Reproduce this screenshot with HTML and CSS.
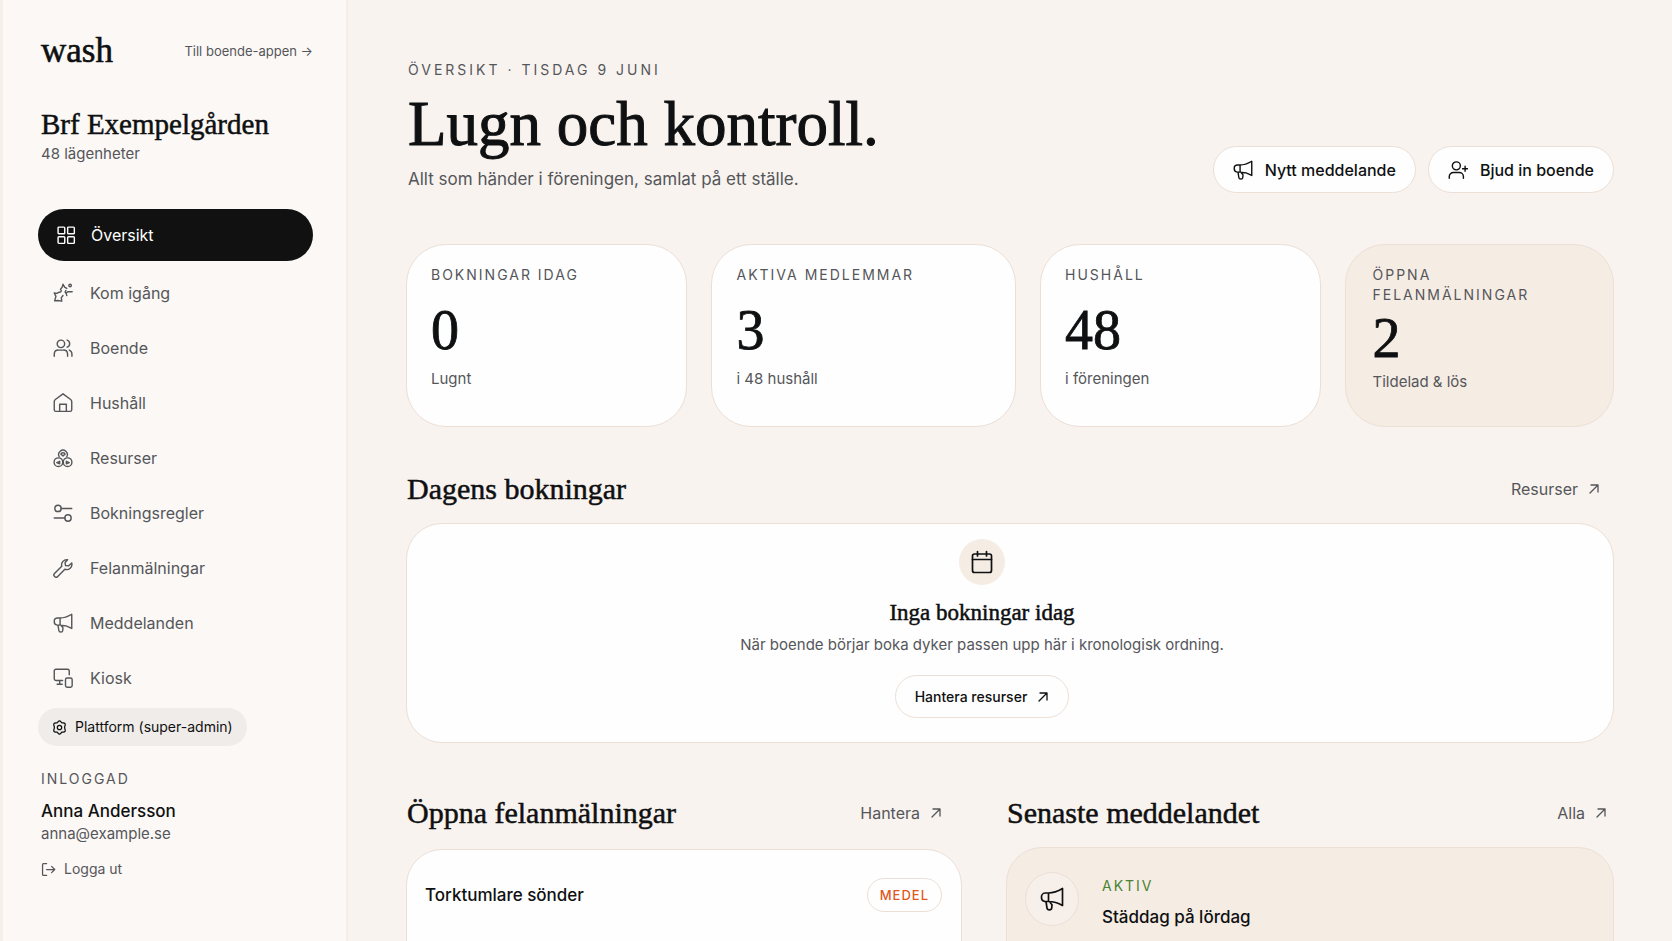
FILE: index.html
```html
<!DOCTYPE html>
<html lang="sv">
<head>
<meta charset="utf-8">
<meta name="viewport" content="width=device-width, initial-scale=1">
<title>wash – Översikt</title>
<link rel="stylesheet" href="styles.css">
</head>
<body>
<svg class="sprite" aria-hidden="true">
  <symbol id="grid" viewBox="0 0 24 24"><rect x="2.500" y="2.500" width="8" height="8" rx="1"/><rect x="14" y="2.500" width="8" height="8" rx="1"/><rect x="2.500" y="14" width="8" height="8" rx="1"/><rect x="14" y="14" width="8" height="8" rx="1"/></symbol>
  <symbol id="sparkle" viewBox="0 0 24 24"><path d="M9 7.500 11 5l1-3.500L14 5l2.500 1.500M1.500 12l3 .5 3-1.500M1.500 12l2 4-1.500 5.500L5.500 21l5 .8-.5-4.300 2-2.500M9 7.500c1.500 1 1 3-.5 3.500M15.500 9c-1.500 1.500-1 2.500.5 3.500M23 10.500h-5c-2 .5-2.500 2-1.500 4.500"/><circle cx="20.500" cy="3" r="1.500"/></symbol>
  <symbol id="users" viewBox="0 0 24 24"><circle cx="9.500" cy="7" r="4.500"/><path d="M1.500 22v-3a5 5 0 0 1 5-4.500h6a5 5 0 0 1 5 4.500v3M17 2.500c4 1.500 4 7 0 8.500M19.500 14.500c2 .7 3.200 2.500 3.200 4.500v3"/></symbol>
  <symbol id="home" viewBox="0 0 24 24"><path d="M1.500 10.500c0-1.200.4-2 1.300-2.700L12 1l9.200 6.800c.9.700 1.300 1.500 1.300 2.700V20a2 2 0 0 1-2 2h-17a2 2 0 0 1-2-2zM8 22v-8.500h8V22"/></symbol>
  <symbol id="resources" viewBox="0 0 24 24"><path d="M7.500 10.500a5.200 5.200 0 1 1 9 0"/><circle cx="6.500" cy="17" r="5.200"/><circle cx="17.500" cy="17" r="5.200"/><path d="M9.500 7.500c.5-2.500 4.500-2.500 5 0l-2.500 2zM4.500 17.500l3.500-1.500v3zM19.500 17.500 16 16v3z"/></symbol>
  <symbol id="sliders" viewBox="0 0 24 24"><circle cx="6" cy="6.500" r="3.800"/><path d="M9.800 6.500H22.500M1.500 18h12.700"/><circle cx="18" cy="18" r="3.800"/></symbol>
  <symbol id="wrench" viewBox="0 0 24 24"><path d="M17.500 2 14.500 5.500l.5 3.500 3.500.5L22.500 6a6.300 6.300 0 0 1-8.300 7.500l-8.500 8.700a2.600 2.600 0 0 1-3.900-3.700l8.700-8.700A6.300 6.300 0 0 1 17.500 2z"/></symbol>
  <symbol id="megaphone" viewBox="0 0 24 24"><path d="M8.500 6c5 0 9-1.500 14-4.500v17c-5-3-9-4-14-4H5a4 4 0 0 1-3.500-4.200A4 4 0 0 1 5 6zM8.500 6v8.500M6 14.500l1 6.500c.3 2.500 4.500 2.500 4.700 0l.3-3.200-2.500-3"/></symbol>
  <symbol id="kiosk" viewBox="0 0 24 24"><path d="M19.500 8V3.500a2 2 0 0 0-2-2h-14a2 2 0 0 0-2 2V13a2 2 0 0 0 2 2h8M8 15v4M5 19.500h6"/><rect x="15" y="12" width="8" height="11" rx="2"/></symbol>
  <symbol id="gear" viewBox="0 0 24 24"><path d="M12 1.500c2 0 2.500 2.500 4 3s4-.5 5 1.500-.8 3.500-.8 6 1.800 4 .8 6-3.500 1-5 1.500-2 3-4 3-2.500-2.500-4-3-4 .5-5-1.500.8-3.500.8-6S2 8 3 6s3.500-1 5-1.500 2-3 4-3z"/><circle cx="12" cy="12" r="3.500"/></symbol>
  <symbol id="logout" viewBox="0 0 24 24"><path d="M9 2.500H4a1.500 1.500 0 0 0-1.500 1.500v16A1.500 1.500 0 0 0 4 21.500h5M9 12h13M17 7l5 5-5 5"/></symbol>
  <symbol id="user-plus" viewBox="0 0 24 24"><circle cx="10" cy="7" r="4.800"/><path d="M1.500 22v-2a5 5 0 0 1 5-5h7a5 5 0 0 1 5 5v2M20.500 7.500v6M17.500 10.500h6"/></symbol>
  <symbol id="calendar" viewBox="0 0 24 24"><rect x="2.500" y="4" width="19" height="18.500" rx="2"/><path d="M2.500 9.500h19M7.500 1.500v4.500M16.500 1.500v4.500"/></symbol>
  <symbol id="arrow" viewBox="0 0 12 12"><path d="M2 10 10 2M3 2h7v7"/></symbol>
</svg>
<div class="app">
  <aside class="sidebar">
    <div class="brand-row">
      <a class="brand" href="#">wash</a>
      <a class="app-link" href="#">Till boende-appen →</a>
    </div>
    <div class="association">
      <p class="association-name">Brf Exempelgården</p>
      <p class="association-size">48 lägenheter</p>
    </div>
    <nav class="nav" aria-label="Huvudmeny">
      <a class="nav-item active" href="#" aria-current="page"><svg class="icon"><use href="#grid"/></svg>Översikt</a>
      <a class="nav-item" href="#"><svg class="icon"><use href="#sparkle"/></svg>Kom igång</a>
      <a class="nav-item" href="#"><svg class="icon"><use href="#users"/></svg>Boende</a>
      <a class="nav-item" href="#"><svg class="icon"><use href="#home"/></svg>Hushåll</a>
      <a class="nav-item" href="#"><svg class="icon"><use href="#resources"/></svg>Resurser</a>
      <a class="nav-item" href="#"><svg class="icon"><use href="#sliders"/></svg>Bokningsregler</a>
      <a class="nav-item" href="#"><svg class="icon"><use href="#wrench"/></svg>Felanmälningar</a>
      <a class="nav-item" href="#"><svg class="icon"><use href="#megaphone"/></svg>Meddelanden</a>
      <a class="nav-item" href="#"><svg class="icon"><use href="#kiosk"/></svg>Kiosk</a>
    </nav>
    <a class="platform" href="#"><svg class="icon icon-small"><use href="#gear"/></svg>Plattform (super-admin)</a>
    <div class="account">
      <p class="label">Inloggad</p>
      <p class="account-name">Anna Andersson</p>
      <p class="account-mail">anna@example.se</p>
      <button class="logout" type="button"><svg class="icon icon-small"><use href="#logout"/></svg>Logga ut</button>
    </div>
  </aside>
  <main class="main">
    <header class="page-head">
      <div class="page-intro">
        <p class="label label-wide">Översikt · tisdag 9 juni</p>
        <h1 class="title">Lugn och kontroll.</h1>
        <p class="lead">Allt som händer i föreningen, samlat på ett ställe.</p>
      </div>
      <div class="actions">
        <button class="button" type="button"><svg class="icon"><use href="#megaphone"/></svg>Nytt meddelande</button>
        <button class="button" type="button"><svg class="icon"><use href="#user-plus"/></svg>Bjud in boende</button>
      </div>
    </header>
    <section class="stats" aria-label="Nyckeltal">
      <article class="stat"><h2 class="label">Bokningar idag</h2><p class="stat-value">0</p><p class="stat-note">Lugnt</p></article>
      <article class="stat"><h2 class="label">Aktiva medlemmar</h2><p class="stat-value">3</p><p class="stat-note">i 48 hushåll</p></article>
      <article class="stat"><h2 class="label">Hushåll</h2><p class="stat-value">48</p><p class="stat-note">i föreningen</p></article>
      <article class="stat stat-alert"><h2 class="label">Öppna felanmälningar</h2><p class="stat-value">2</p><p class="stat-note">Tildelad &amp; lös</p></article>
    </section>
    <section class="bookings">
      <div class="section-head">
        <h2 class="heading">Dagens bokningar</h2>
        <a class="more" href="#">Resurser<svg class="arrow"><use href="#arrow"/></svg></a>
      </div>
      <div class="card empty">
        <span class="empty-icon"><svg class="icon icon-large"><use href="#calendar"/></svg></span>
        <h3 class="empty-title">Inga bokningar idag</h3>
        <p class="empty-text">När boende börjar boka dyker passen upp här i kronologisk ordning.</p>
        <a class="button button-small" href="#">Hantera resurser<svg class="arrow"><use href="#arrow"/></svg></a>
      </div>
    </section>
    <div class="columns">
      <section class="column">
        <div class="section-head">
          <h2 class="heading">Öppna felanmälningar</h2>
          <a class="more" href="#">Hantera<svg class="arrow"><use href="#arrow"/></svg></a>
        </div>
        <div class="card issue">
          <h3 class="item-title">Torktumlare sönder</h3>
          <span class="badge">Medel</span>
        </div>
      </section>
      <section class="column">
        <div class="section-head section-head-edge">
          <h2 class="heading">Senaste meddelandet</h2>
          <a class="more" href="#">Alla<svg class="arrow"><use href="#arrow"/></svg></a>
        </div>
        <div class="card message">
          <span class="message-icon"><svg class="icon icon-large"><use href="#megaphone"/></svg></span>
          <div>
            <p class="label label-active">Aktiv</p>
            <h3 class="item-title">Städdag på lördag</h3>
          </div>
        </div>
      </section>
    </div>
  </main>
</div>
</body>
</html>
```

FILE: styles.css
```css
:root {
  --ink: #0f1011;
  --muted: #55565a;
  --page: #f8f3ef;
  --panel: #fbf8f5;
  --sand: #f5ece4;
  --line: #ecdfd6;
  --sans: Inter, "Liberation Sans", sans-serif;
  --serif: "Liberation Serif", serif;
}
* { box-sizing: border-box; }
html, body { height: 100%; }
body {
  margin: 0;
  overflow: hidden;
  background: var(--page);
  color: var(--ink);
  font: 400 16px/24px var(--sans);
}
h1, h2, h3, p { margin: 0; font-weight: 400; }
a { color: inherit; text-decoration: none; }
button { font: inherit; color: inherit; cursor: pointer; }
.sprite { position: absolute; width: 0; height: 0; }
.icon, .arrow {
  flex: none;
  width: 20px;
  height: 20px;
  fill: none;
  stroke: currentColor;
  stroke-width: 1.7;
  stroke-linecap: round;
  stroke-linejoin: round;
}
.icon-small { width: 15px; height: 15px; stroke-width: 2; }
.icon-large { width: 24px; height: 24px; }
.arrow { width: 12px; height: 12px; stroke-width: 1.3; }
.label {
  font-size: 14px;
  line-height: 20px;
  letter-spacing: 2px;
  text-transform: uppercase;
  color: var(--muted);
}
.label-wide { letter-spacing: 3px; }

.app { display: flex; min-height: 100%; }
.sidebar {
  flex: none;
  width: 348px;
  padding: 33px 33px 32px 35px;
  border-left: 3px solid #f6f0ea;
  border-right: 2px solid #f4eee9;
  background: var(--panel);
}
.brand-row {
  display: flex;
  align-items: center;
  justify-content: space-between;
  padding-left: 3px;
}
.brand { font: 400 35px/36px var(--serif); -webkit-text-stroke: 0.6px; }
.app-link { font-size: 13px; color: var(--muted); }
.association { padding: 38px 0 0 3px; }
.association-name { font: 400 29px/34px var(--serif); -webkit-text-stroke: 0.5px; }
.association-size { font-size: 15px; line-height: 26px; color: var(--muted); }
.nav { margin-top: 42px; }
.nav-item {
  display: flex;
  align-items: center;
  gap: 17px;
  height: 55px;
  padding-left: 15px;
  font-size: 16px;
  color: var(--muted);
}
.nav-item.active {
  height: 52px;
  margin-bottom: 4px;
  padding-left: 18px;
  gap: 15px;
  border-radius: 26px;
  background: #111;
  color: #fff;
}
.platform {
  display: inline-flex;
  align-items: center;
  gap: 8px;
  height: 38px;
  margin-top: 3px;
  padding: 0 14px;
  border-radius: 19px;
  background: #f0ece9;
  font-size: 14px;
}
.account { padding: 23px 0 0 3px; }
.account-name { margin-top: 10px; font-size: 17px; font-weight: 500; }
.account-mail { font-size: 15px; line-height: 22px; color: var(--muted); }
.logout {
  display: flex;
  align-items: center;
  gap: 8px;
  margin-top: 12px;
  padding: 0;
  border: 0;
  background: none;
  font-size: 14px;
  color: var(--muted);
}

.main { flex: 1; min-width: 0; padding: 60px 58px 0; }
.page-head { display: flex; align-items: flex-end; justify-content: space-between; }
.page-intro { padding-left: 2px; }
.title { margin-top: 6px; font: 400 63px/76px var(--serif); -webkit-text-stroke: 1px; }
.lead { margin-top: 3px; font-size: 17px; line-height: 28px; color: var(--muted); }
.actions { display: flex; gap: 12px; }
.button {
  display: inline-flex;
  align-items: center;
  gap: 12px;
  height: 47px;
  padding: 0 19px;
  border: 1px solid var(--line);
  border-radius: 24px;
  background: #fefefe;
  font-size: 16px;
  font-weight: 500;
}
.button-small { height: 43px; gap: 10px; font-size: 14px; }
.stats {
  display: grid;
  grid-template-columns: 281fr 304fr 280fr 269fr;
  gap: 24px;
  margin-top: 51px;
}
.stat {
  min-height: 183px;
  padding: 20px 24px;
  border: 1px solid var(--line);
  border-radius: 40px;
  background: #fefefe;
}
.stat-value { margin: 17px 0 9px; font: 400 56px/56px var(--serif); -webkit-text-stroke: 0.8px; }
.stat-note { font-size: 15px; color: var(--muted); }
.stat-alert { padding-left: 27px; background: var(--sand); }
.stat-alert .stat-value { margin: 7px 0 6px; line-height: 52px; }

.bookings { margin-top: 42px; }
.section-head {
  display: flex;
  align-items: center;
  justify-content: space-between;
  padding: 0 14px 0 1px;
}
.heading { font: 400 30px/40px var(--serif); -webkit-text-stroke: 0.5px; }
.more { display: flex; align-items: center; gap: 10px; color: var(--muted); }
.card { margin-top: 14px; border: 1px solid var(--line); border-radius: 36px; background: #fefefe; }
.empty {
  display: flex;
  flex-direction: column;
  align-items: center;
  padding: 15px 56px 24px 0;
}
.empty-icon {
  display: grid;
  place-items: center;
  width: 46px;
  height: 46px;
  border-radius: 50%;
  background: var(--sand);
}
.empty-title { margin-top: 13px; font: 400 23px/30px var(--serif); -webkit-text-stroke: 0.5px; }
.empty-text { margin: 5px 0 18px; font-size: 15px; color: var(--muted); }
.columns {
  display: grid;
  grid-template-columns: 556fr 608fr;
  gap: 44px;
  margin-top: 50px;
}
.column .section-head { padding-right: 20px; }
.column .section-head-edge { padding-right: 7px; }
.issue {
  display: flex;
  align-items: flex-start;
  justify-content: space-between;
  min-height: 200px;
  margin-top: 16px;
  padding: 28px 19px 28px 18px;
}
.item-title { font-size: 17px; line-height: 34px; font-weight: 500; }
.badge {
  padding: 0 12px;
  border: 1px solid var(--line);
  border-radius: 17px;
  color: #e2571c;
  font-size: 13px;
  font-weight: 500;
  line-height: 32px;
  letter-spacing: 1px;
  text-transform: uppercase;
}
.message {
  display: flex;
  align-items: flex-start;
  gap: 23px;
  min-height: 200px;
  padding: 24px 18px;
  background: var(--sand);
}
.message-icon {
  display: grid;
  place-items: center;
  width: 54px;
  height: 54px;
  border: 1px solid var(--line);
  border-radius: 50%;
  background: #f7f0ea;
}
.label-active { margin: 4px 0; color: #4b8332; }
```
